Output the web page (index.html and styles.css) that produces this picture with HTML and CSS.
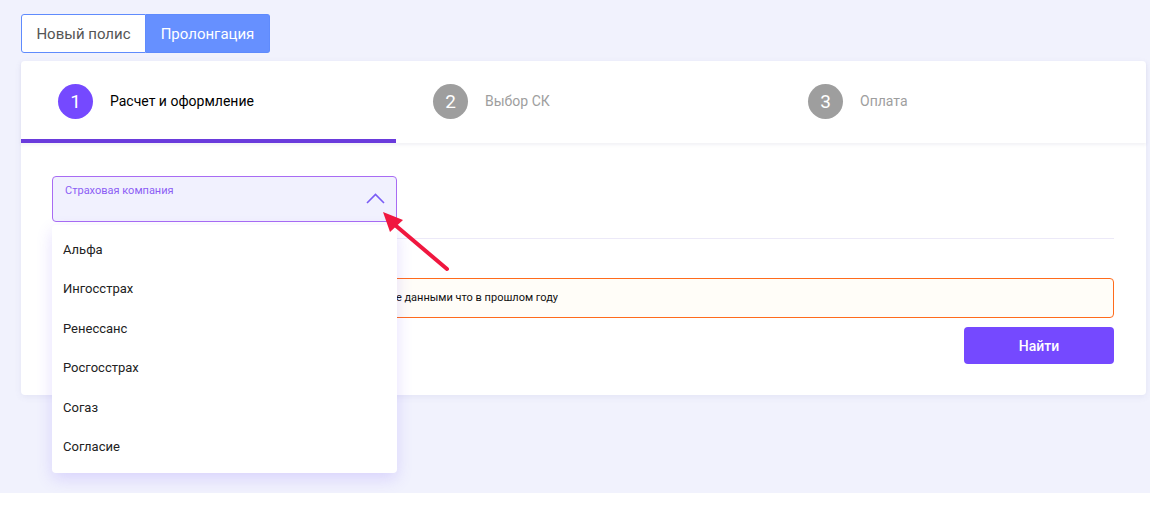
FILE: index.html
```html
<!DOCTYPE html>
<html lang="ru">
<head>
<meta charset="utf-8">
<link rel="stylesheet" href="styles.css">
</head>
<body>
<div class="page">
  <div class="toggle">
    <button class="tg">Новый полис</button>
    <button class="tg tg-active">Пролонгация</button>
  </div>
  <div class="card">
    <div class="steps">
      <div class="step step-active"><span class="num">1</span><span class="lbl">Расчет и оформление</span></div>
      <div class="step"><span class="num">2</span><span class="lbl">Выбор СК</span></div>
      <div class="step"><span class="num">3</span><span class="lbl">Оплата</span></div>
    </div>
    <div class="body">
      <div class="select-wrap">
        <div class="select">
          <span class="sel-label">Страховая компания</span>
          <svg class="chev" width="19" height="11" viewBox="0 0 19 11"><path d="M1 10 L9.5 1.5 L18 10" fill="none" stroke="#7a5cf5" stroke-width="1.6"/></svg>
        </div>
        <ul class="dropdown">
          <li>Альфа</li>
          <li>Ингосстрах</li>
          <li>Ренессанс</li>
          <li>Росгосстрах</li>
          <li>Согаз</li>
          <li>Согласие</li>
        </ul>
      </div>
      <div class="divider"></div>
      <div class="alert">Вы можете оформить продление полиса ОСАГО на год с теми же данными что в прошлом году</div>
      <div class="actions"><button class="find">Найти</button></div>
    </div>
  </div>
  <svg class="arrow" width="80" height="70" viewBox="0 0 80 70">
    <line x1="14" y1="15" x2="66" y2="59" stroke="#f0173f" stroke-width="4" stroke-linecap="round"/>
    <polygon points="2,2 9,22 22,10" fill="#f0173f"/>
  </svg>
</div>
</body>
</html>
```
FILE: styles.css
```css
* { box-sizing: border-box; }
html, body { margin: 0; padding: 0; background: #fff; }
body { font-family: Roboto, "Noto Sans", Arial, sans-serif; }
.page {
  position: relative;
  height: 493px;
  background: #f1f2fd;
  padding: 14px 4px 0 21px;
}
.toggle { display: flex; }
.tg {
  font-family: inherit;
  height: 39px;
  border: 1px solid #5f8bfd;
  background: #fff;
  color: #555;
  font-size: 15px;
  padding: 0;
  width: 125px;
  border-radius: 3px 0 0 3px;
  cursor: pointer;
}
.tg-active {
  width: 124px;
  background: #6690ff;
  color: #fff;
  border-left: none;
  border-radius: 0 3px 3px 0;
}
.card {
  margin-top: 8px;
  background: #fff;
  border-radius: 4px;
  box-shadow: 0 2px 6px rgba(120,120,180,0.10);
}
.steps {
  display: flex;
  height: 82px;
  box-shadow: 0 2px 3px rgba(120,120,160,0.10);
  position: relative;
  z-index: 1;
}
.step {
  flex: 0 0 375px;
  display: flex;
  align-items: flex-start;
  padding: 23px 0 0 37px;
  gap: 17px;
}
.step-active { border-bottom: 4px solid #6a3bdc; }
.num {
  width: 35px; height: 35px;
  border-radius: 50%;
  background: #9e9e9e;
  color: #fff;
  display: flex; align-items: center; justify-content: center;
  font-size: 19px;
}
.step-active .num { background: #7549ff; }
.lbl { font-size: 14px; color: #9e9e9e; line-height: 35px; }
.step-active .lbl { color: #000; }
.body {
  padding: 33px 32px 31px 31px;
  border-radius: 0 0 4px 4px;
}
.select-wrap { position: relative; width: 345px; z-index: 5; }
.select {
  height: 46px;
  border: 1px solid #a86cf3;
  border-radius: 4px;
  background: #f1f1fe;
  position: relative;
}
.sel-label {
  position: absolute;
  left: 12px; top: 7px;
  font-size: 11px;
  color: #8c5ef5;
}
.chev { position: absolute; left: 313px; top: 16px; }
.dropdown {
  position: absolute;
  left: 0; top: 49px;
  width: 345px;
  margin: 0;
  list-style: none;
  background: #fff;
  padding: 5px 0 7px;
  border-radius: 4px;
  box-shadow: 0 6px 16px rgba(110,80,250,0.18);
}
.dropdown li {
  height: 39.4px;
  line-height: 39.4px;
  padding-left: 11px;
  font-size: 13px;
  color: #222;
}
.divider {
  margin-top: 16px;
  height: 1px;
  background: #ece9f8;
}
.alert {
  margin-top: 39px;
  height: 40px;
  border: 1px solid #ff6b1c;
  border-radius: 4px;
  background: #fffdf8;
  font-size: 11px;
  color: #111;
  line-height: 38px;
  padding-left: 12px;
  white-space: nowrap;
  overflow: hidden;
}
.actions { display: flex; justify-content: flex-end; margin-top: 9px; }
.find {
  font-family: inherit;
  width: 150px; height: 37px;
  border: none;
  border-radius: 4px;
  background: #7549ff;
  color: #fff;
  font-size: 14px;
  font-weight: 500;
}
.arrow { position: absolute; left: 381px; top: 210px; z-index: 10; }
```
